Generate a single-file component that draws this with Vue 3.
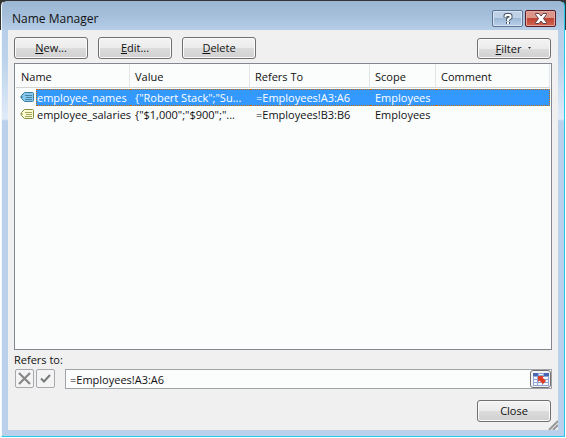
<script setup>
import { ref } from 'vue'

const columns = ['Name', 'Value', 'Refers To', 'Scope', 'Comment']
const names = [
  { name: 'employee_names', value: '{"Robert Stack";"Su...', refersTo: '=Employees!A3:A6', scope: 'Employees', comment: '' },
  { name: 'employee_salaries', value: '{"$1,000";"$900";"...', refersTo: '=Employees!B3:B6', scope: 'Employees', comment: '' },
]
const selected = ref(0)
const refersTo = ref(names[0].refersTo)

function select(i) {
  selected.value = i
  refersTo.value = names[i].refersTo
}
</script>

<template>
  <div class="frame">
    <section class="window" aria-labelledby="window-title">
      <header class="titlebar">
        <h1 id="window-title">Name Manager</h1>
        <button class="caption help" type="button" aria-label="Help">
          <svg width="12" height="12" viewBox="0 0 12 12" fill="none">
            <path d="M3.500 4.500V3q0-1 1-1h3q1 0 1 1v1.500L6 6.500V8M6 9v2" stroke="#4d586a" stroke-width="4" />
            <path d="M3.500 4V3q0-1 1-1h3q1 0 1 1v1.500L6 6.500V8M6 9v2" stroke="#fff" stroke-width="2" />
          </svg>
        </button>
        <button class="caption shut" type="button" aria-label="Close window">
          <svg width="14" height="11" viewBox="0 0 14 11" fill="none">
            <path d="M1.500 .5h3.500l2 2.500 2-2.500h3.500v1L9.500 5.500l3 4v1H9L7 8l-2 2.500H1.500v-1l3-4-3-4z" fill="#fff" stroke="#5c4048" />
          </svg>
        </button>
      </header>

      <main class="content">
        <div class="toolbar">
          <button class="btn" type="button"><u>N</u>ew...</button>
          <button class="btn" type="button"><u>E</u>dit...</button>
          <button class="btn" type="button"><u>D</u>elete</button>
          <button class="btn filter" type="button">
            <span><u>F</u>ilter</span>
            <svg width="5" height="3" viewBox="0 0 5 3"><path d="M1 0h3L2.500 2z" fill="#333" /></svg>
          </button>
        </div>

        <div class="list">
          <table>
            <colgroup>
              <col class="c-name" /><col class="c-value" /><col class="c-refers" /><col class="c-scope" /><col />
            </colgroup>
            <thead>
              <tr><th v-for="c in columns" :key="c" scope="col">{{ c }}</th></tr>
            </thead>
            <tbody>
              <tr v-for="(n, i) in names" :key="n.name" :class="{ selected: i === selected }" @click="select(i)">
                <td class="name-cell">
                  <div class="name">
                    <svg class="tag" width="15" height="11" viewBox="0 0 15 11">
                      <path class="tag-body" d="M4.500 .5h8q1 0 1 1v7q0 1-1 1h-8L1.500 6.500v-3z" />
                      <path class="tag-line" d="M0 5h3M5 3.500h7M6 5.500h6M5 7.500h7" />
                    </svg>
                    <span class="label">{{ n.name }}</span>
                  </div>
                </td>
                <td>{{ n.value }}</td>
                <td class="formula">{{ n.refersTo }}</td>
                <td>{{ n.scope }}</td>
                <td>{{ n.comment }}</td>
              </tr>
            </tbody>
          </table>
        </div>

        <label class="refers-label" for="refers">Refers to:</label>
        <div class="refers">
          <button class="mini" type="button" aria-label="Cancel edit">
            <svg width="15" height="15" viewBox="0 0 15 15" fill="none"><path d="M2 2l11 11M13 2L2 13" stroke="#858789" stroke-width="2.200" /></svg>
          </button>
          <button class="mini" type="button" aria-label="Accept edit">
            <svg width="13" height="13" viewBox="0 0 13 13" fill="none"><path d="M2 6.500l3 3L11 3" stroke="#77797b" stroke-width="2" /></svg>
          </button>
          <div class="field">
            <input id="refers" v-model="refersTo" type="text" />
            <button class="picker" type="button" aria-label="Collapse dialog">
              <svg width="16" height="13" viewBox="0 0 16 13">
                <path d="M0 0h16v13H0z" fill="#8fa6d6" />
                <path d="M0 0h5v3H0zM11 0h5v3h-5z" fill="#4668b4" />
                <path d="M6 1h4v1H6zM1 4h3v2H1zM5 4h4v2H5zM10 4h5v2h-5zM1 7h3v2H1zM5 7h4v2H5zM10 7h5v2h-5zM1 10h3v2H1zM5 10h4v2H5zM10 10h5v2h-5z" fill="#f3f6fd" />
                <path d="M5 3h6L9.500 4.500 13 8l-3 3-3.500-3.500L5 9z" fill="#df3c23" />
              </svg>
            </button>
          </div>
        </div>

        <footer class="footer">
          <button class="btn" type="button">Close</button>
        </footer>
        <svg class="grip" width="10" height="10" viewBox="0 0 10 10" fill="none">
          <path d="M1 10l9-9M5 10l5-5" stroke="#999" stroke-width="2" />
        </svg>
      </main>
    </section>
  </div>
</template>

<style>
body {
  margin: 0;
  background: #fff;
}
</style>

<style scoped>
* {
  box-sizing: border-box;
}
.frame {
  display: flex;
  min-height: 100vh;
  padding: 0 1px 1px;
  background: linear-gradient(#333 30px, #fff 30px);
  font: 11px/16px "Open Sans", "Noto Sans", sans-serif;
  color: #111;
}
.window {
  flex: 1;
  min-width: 0;
  display: flex;
  flex-direction: column;
  padding: 0 6px 6px;
  border: 1px solid #24c9ee;
  border-top-color: #343438;
  border-left-color: #f5fafd;
  border-radius: 6px 6px 0 0;
  background: linear-gradient(#9bb6d3, #a6c0dc 16px, #b7cfe8 30px, #bcd3eb 60px, #dfebf8 118px, #b9d1ea 120px);
}
.titlebar {
  display: flex;
  align-items: center;
  gap: 2px;
  height: 29px;
  padding: 6px 2px 0 4px;
}
h1 {
  flex: 1;
  margin: 0;
  font-size: 12px;
  font-weight: 400;
  line-height: 16px;
}
button,
input {
  font: inherit;
  color: inherit;
}
button {
  padding: 0;
}
.caption {
  display: flex;
  align-items: center;
  justify-content: center;
  width: 31px;
  height: 17px;
  border: 1px solid #5d7390;
  border-radius: 2px;
  box-shadow: inset 0 0 0 1px #d5e3f2;
}
.help {
  background: linear-gradient(#bed1e7 50%, #9db8d5 50%, #b8d0ea);
}
.shut {
  border-color: #571c24;
  box-shadow: inset 0 0 0 1px #e5a59d;
  background: linear-gradient(#dc9589 45%, #bd4031 45%, #cf6550);
}
.content {
  position: relative;
  flex: 1;
  display: flex;
  flex-direction: column;
  padding: 7px 6px 8px;
  background: #f0f0f0;
}
.toolbar {
  display: flex;
  gap: 10px;
  padding-right: 1px;
}
.btn {
  width: 74px;
  height: 22px;
  border: 1px solid #707070;
  border-radius: 3px;
  background: linear-gradient(#f3f3f3, #ebebeb 50%, #dcdcdc 50%, #d0d0d0);
  box-shadow: inset 0 0 0 1px #fafafa;
  text-align: center;
}
.filter {
  display: flex;
  align-items: center;
  justify-content: center;
  gap: 6px;
  align-self: flex-end;
  height: 21px;
  margin-left: auto;
}
.list {
  flex: 1;
  margin-top: 4px;
  padding: 0 1px;
  border: 1px solid #828790;
  background: #fbfdfd;
}
table {
  width: 100%;
  table-layout: fixed;
  border-collapse: separate;
  border-spacing: 0;
}
.c-name {
  width: 114px;
}
.c-value,
.c-refers {
  width: 120px;
}
.c-scope {
  width: 66px;
}
th {
  height: 24px;
  padding: 2px 5px 0;
  border-right: 1px solid #e2e5e9;
  border-bottom: 1px solid #d5d5d5;
  font-weight: 400;
  text-align: left;
}
tbody::before {
  content: "";
  display: table-row;
  height: 1px;
}
td {
  height: 17px;
  padding: 0 5px;
  line-height: 15px;
  border: 0 solid transparent;
  border-width: 1px 0;
  white-space: nowrap;
}
.formula {
  padding-left: 6px;
}
.name-cell {
  padding: 0;
  border-width: 0;
}
.name {
  display: flex;
  align-items: flex-start;
  padding-left: 4px;
}
.tag {
  flex: none;
  margin: 3px 1px 0 0;
}
.tag-body {
  fill: #fbfbd0;
  stroke: #8c8c43;
}
.tag-line {
  fill: none;
  stroke: #a5a55e;
}
.label {
  flex: 1;
  border: 1px solid transparent;
  border-right: 0;
}
.selected td:not(.name-cell),
.selected .label {
  background: #3399ff;
  border-color: #cc6600;
  border-style: dotted;
  color: #fff;
}
.selected td:last-child {
  border-right-width: 1px;
}
.selected .tag-body {
  fill: #89c8ee;
  stroke: #3c7e9d;
}
.selected .tag-line {
  stroke: #4787a6;
}
.refers-label {
  margin-top: 2px;
}
.refers {
  display: flex;
  gap: 2px;
  margin-top: 1px;
  padding-left: 1px;
}
.mini {
  display: flex;
  align-items: center;
  justify-content: center;
  width: 19px;
  height: 19px;
  border: 1px solid #a6a9ad;
  border-radius: 2px;
  background: #f4f4f4;
}
.field {
  flex: 1;
  display: flex;
  height: 20px;
  margin-left: 8px;
  border: 1px solid #a0a4a8;
  background: #fbfdfd;
}
.field input {
  flex: 1;
  min-width: 0;
  padding: 2px 4px 0;
  border: 0;
  outline: 0;
  background: transparent;
}
.picker {
  display: flex;
  align-items: center;
  justify-content: center;
  width: 21px;
  border: 1px solid #707070;
  border-radius: 3px;
  background: #f2f2f2;
}
.footer {
  display: flex;
  justify-content: flex-end;
  margin-top: 11px;
  padding-right: 1px;
}
.grip {
  position: absolute;
  right: 0;
  bottom: 0;
}
</style>
